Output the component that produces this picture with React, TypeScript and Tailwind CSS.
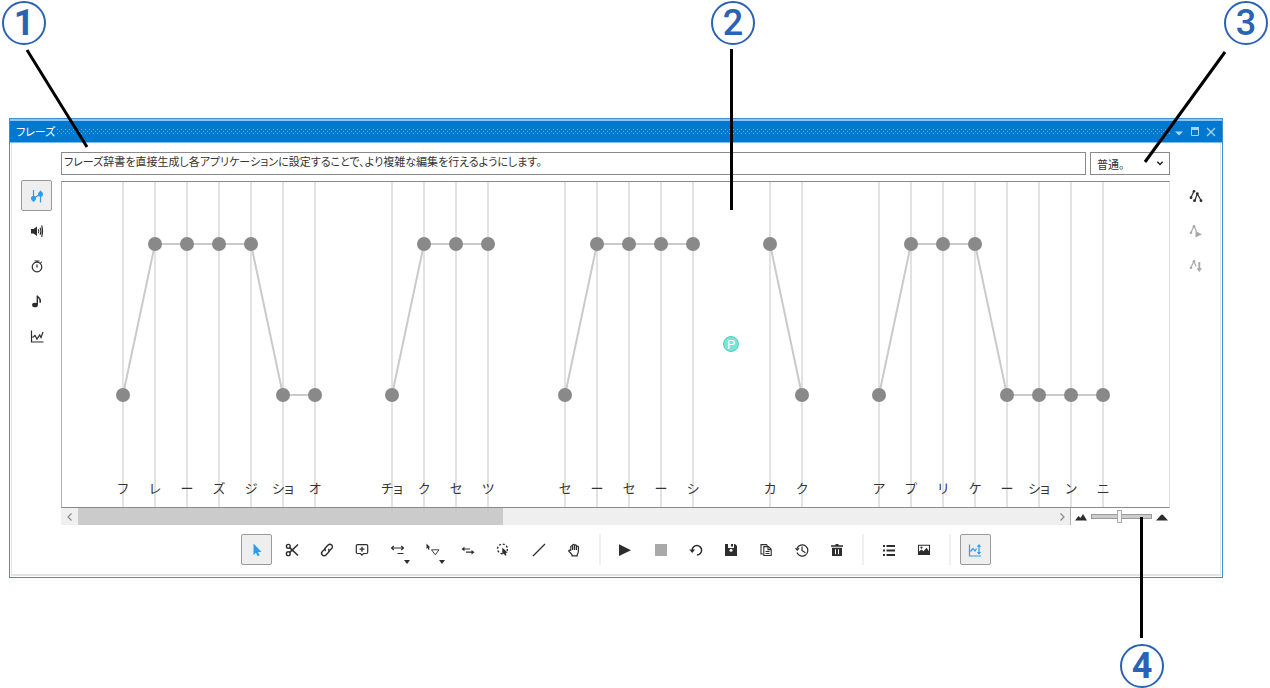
import { useState } from "react";
import type { ReactNode } from "react";

type Point = { x: number; high: boolean; label: string };

const HIGH_Y = 62;
const LOW_Y = 213;

function phrase(start: number, moras: [string, boolean][]): Point[] {
  return moras.map(([label, high], i) => ({ x: start + i * 32, high, label }));
}

const phrases: Point[][] = [
  phrase(61, [["フ", false], ["レ", true], ["ー", true], ["ズ", true], ["ジ", true], ["ショ", false], ["オ", false]]),
  phrase(330, [["チョ", false], ["ク", true], ["セ", true], ["ツ", true]]),
  phrase(503, [["セ", false], ["ー", true], ["セ", true], ["ー", true], ["シ", true]]),
  phrase(708, [["カ", true], ["ク", false]]),
  phrase(817, [["ア", false], ["プ", true], ["リ", true], ["ケ", true], ["ー", false], ["ショ", false], ["ン", false], ["ニ", false]]),
];

function Icon({ children }: { children: ReactNode }) {
  return (
    <svg viewBox="0 0 16 16" className="size-4 shrink-0" fill="none" stroke="currentColor" strokeWidth="1.2" aria-hidden="true">
      {children}
    </svg>
  );
}

const icons = {
  pitch: (
    <Icon>
      <path d="M4.500 2v10M11.500 5v9.500M4.500 10.500l7-4.500" strokeWidth="1.200" />
      <circle cx="4.500" cy="10.200" r="2.500" fill="currentColor" stroke="none" />
      <circle cx="11.500" cy="6.300" r="2.500" fill="currentColor" stroke="none" />
      <path d="M2.500 11.500h4l-2 2.800zM9.500 5h4l-2-2.800z" fill="currentColor" stroke="none" />
    </Icon>
  ),
  volume: (
    <Icon>
      <path d="M2 6h2.500l3.500-2.500v9.500L4.500 10.500H2z" fill="currentColor" stroke="none" />
      <path d="M9.300 6.200q1.200 2 0 4M11 4.700q2 3.500 0 7M12.700 2.500q1.800 5.700 0 11.500" strokeWidth="1.100" />
    </Icon>
  ),
  timer: (
    <Icon>
      <circle cx="8" cy="9" r="4.800" />
      <path d="M5.500 3h5M8 3v1.500M8 6.500v3M11.500 4.800l1.200-.8" />
    </Icon>
  ),
  note: (
    <Icon>
      <ellipse cx="6" cy="12" rx="2.900" ry="2.300" fill="currentColor" stroke="none" />
      <path d="M8.300 12V2.500c.4 2.300 4.400 3 2.700 7.300" strokeWidth="1.400" />
    </Icon>
  ),
  chart: (
    <Icon>
      <path d="M2.500 2.500v11.500H14.500M3.500 9.500L6 7.500l2 3.500 2.700-4 1.300 2.500 2-5.500" strokeWidth="1.200" />
    </Icon>
  ),
  pointer: (
    <Icon>
      <path d="M4.500 1.500v11.500l2.500-2.200 1.600 3.500 2-1-1.600-3.200h3.500z" fill="currentColor" stroke="none" />
    </Icon>
  ),
  scissors: (
    <Icon>
      <circle cx="4.300" cy="4.300" r="1.900" strokeWidth="1.400" />
      <circle cx="4.300" cy="11.700" r="1.900" strokeWidth="1.400" />
      <path d="M5.700 10.400L14 2.500M5.700 5.600L14 13.500" strokeWidth="1.500" />
    </Icon>
  ),
  link: (
    <Icon>
      <g transform="rotate(-45 8 8)" strokeWidth="1.400">
        <path d="M8 5.700H3.700a2.500 2.500 0 0 0 0 5h3.500a2.500 2.500 0 0 0 2.500-2.500" />
        <path d="M8 10.300h4.300a2.500 2.500 0 0 0 0-5H8.800a2.500 2.500 0 0 0-2.500 2.500" />
      </g>
    </Icon>
  ),
  comment: (
    <Icon>
      <path d="M3.500 2.600h9q1.200 0 1.200 1.200v6.500q0 1.200-1.200 1.200H9.500L8 13.200l-1.500-1.700h-3q-1.200 0-1.200-1.200V3.800q0-1.200 1.200-1.200z" strokeWidth="1.200" />
      <path d="M8 4.700v5M5.500 7.200h5" strokeWidth="1.300" />
    </Icon>
  ),
  stretch: (
    <Icon>
      <path d="M1.500 6h12M3.800 4L1.500 6l2.300 2M11.200 4L13.500 6l-2.300 2M7.500 11.500h6" strokeWidth="1.100" />
    </Icon>
  ),
  shape: (
    <Icon>
      <path d="M1.500 1.500v5.500l1.200-1 .9 2 1-.5-.9-1.900 1.700-.1z" fill="currentColor" stroke="none" />
      <path d="M6.500 7.800h7.500l-3.700 5z" strokeWidth=".9" />
    </Icon>
  ),
  swap: (
    <Icon>
      <path d="M3 7h7M6 10.200h7" strokeWidth="1.200" />
      <path d="M4.500 4.800v4.400L1.500 7zM11.500 8v4.400l3-2.200z" fill="currentColor" stroke="none" />
    </Icon>
  ),
  lasso: (
    <Icon>
      <circle cx="7.500" cy="7" r="4.900" strokeDasharray="2 1.800" strokeWidth="1.400" />
      <path d="M7.300 5.500v7.300l1.600-1.400 1.200 2.300 1.400-.7-1.100-2.200h2.300z" fill="currentColor" stroke="none" />
    </Icon>
  ),
  line: (
    <Icon>
      <path d="M2 14L14 2" strokeWidth="1.300" />
    </Icon>
  ),
  hand: (
    <Icon>
      <path d="M4.800 8.800V4.500q.9-1.500 1.800 0V3q1-1.300 1.900 0v.5q1-1.200 1.900 0v1q1.400-1 2 .3V9q0 2.300-1.200 3.500v1.300H6v-1.300L2.800 9.200q-.3-1.500 1.200-1l.8.6M6.600 4.500V8M8.500 3.500V8M10.400 4.500V8" strokeWidth="1.200" />
    </Icon>
  ),
  play: (
    <Icon>
      <path d="M2 2.300v11.700l12-5.800z" fill="currentColor" stroke="none" />
    </Icon>
  ),
  stop: (
    <Icon>
      <path d="M2 2h12v12H2z" fill="currentColor" stroke="none" />
    </Icon>
  ),
  undo: (
    <Icon>
      <path d="M4.200 8.500a4.700 4.700 0 1 1 4.700 4.500" strokeWidth="1.500" />
      <path d="M1.300 7.500h5.800L4.200 11z" fill="currentColor" stroke="none" />
    </Icon>
  ),
  save: (
    <Icon>
      <path d="M2 2h3v4h6V2h1l2 2v10H2z" fill="currentColor" stroke="none" />
      <path d="M8 2h2v2.500H8z" fill="currentColor" stroke="none" />
      <circle cx="8" cy="8.300" r="1.500" fill="white" stroke="none" />
    </Icon>
  ),
  copy: (
    <Icon>
      <path d="M5 12H3V2.600h5.500l1 1.200M5.800 4.600h4.700l2.700 2.700v6.200H5.800z" strokeWidth="1.100" />
      <path d="M10 4.600v3h3M7.500 9.500h4M7.500 11.500h4" strokeWidth="1.100" />
    </Icon>
  ),
  history: (
    <Icon>
      <path d="M3 6.500a5.600 5.600 0 1 1 0 4M1.500 6.200l1.800 2 1.700-2M8 4.500v4l3.400 2.300" strokeWidth="1.200" />
    </Icon>
  ),
  trash: (
    <Icon>
      <path d="M2 3.200h12v1.500H2zM6.500 2h3v1.500h-3z" fill="currentColor" stroke="none" />
      <path d="M3 5.700h10V14H3zM6 7.200v5h1v-5zM9 7.200v5h1v-5z" fill="currentColor" fillRule="evenodd" stroke="none" />
    </Icon>
  ),
  list: (
    <Icon>
      <path d="M5.500 4H14M5.500 8.500H14M5.500 13H14" strokeWidth="1.900" />
      <path d="M2 4h2M2 8.500h2M2 13h2" strokeWidth="2" />
    </Icon>
  ),
  image: (
    <Icon>
      <path d="M2.500 3.200h11v9.300h-11z" strokeWidth="1.100" />
      <path d="M3 12.200V9.500L5.500 7.500l2 1.800 3-3.500 2.700 3.700v2.700z" fill="currentColor" stroke="none" />
      <circle cx="5.500" cy="5.600" r="1.100" fill="currentColor" stroke="none" />
    </Icon>
  ),
  range: (
    <Icon>
      <path d="M2.500 2.500v11.500H14M3.500 9.500L6 6.500l2 2.500 1.500-2.500M12 3.500v8" strokeWidth="1.200" />
      <path d="M9.900 4.800L12 2l2.100 2.800zM9.900 10L12 12.800l2.100-2.800z" fill="currentColor" stroke="none" />
    </Icon>
  ),
  curve: (
    <Icon>
      <path d="M3 9.500l3-6.500M6.800 12.700l2.500-7 3.900 7" strokeWidth="1.200" />
      <circle cx="6" cy="3.300" r="1.300" fill="currentColor" stroke="none" />
      <circle cx="9.300" cy="5.700" r="1.400" fill="currentColor" stroke="none" />
      <circle cx="3" cy="9.700" r="1.400" fill="currentColor" stroke="none" />
      <circle cx="6.500" cy="12.700" r="1.400" fill="currentColor" stroke="none" />
      <circle cx="13" cy="12.700" r="1.400" fill="currentColor" stroke="none" />
    </Icon>
  ),
  curvePlay: (
    <Icon>
      <path d="M3 9.500l3-6.500 2.500 5.500" strokeWidth="1.200" />
      <circle cx="6" cy="3.300" r="1.300" fill="currentColor" stroke="none" />
      <circle cx="3" cy="9.700" r="1.300" fill="currentColor" stroke="none" />
      <path d="M7.500 8v6.500l6.500-3.200z" fill="currentColor" stroke="none" />
    </Icon>
  ),
  curveDown: (
    <Icon>
      <path d="M3 9.500l3-6.500 2 5.500" strokeWidth="1.200" />
      <path d="M11.300 4v7" strokeWidth="1.900" />
      <circle cx="6" cy="3.300" r="1.300" fill="currentColor" stroke="none" />
      <circle cx="3" cy="9.700" r="1.300" fill="currentColor" stroke="none" />
      <path d="M8.500 10.300h5.600l-2.800 3.700z" fill="currentColor" stroke="none" />
    </Icon>
  ),
};

type IconName = keyof typeof icons;

function ToolButton({ icon, label, active, disabled, menu }: { icon: IconName; label: string; active?: boolean; disabled?: boolean; menu?: boolean }) {
  return (
    <button
      type="button"
      aria-label={label}
      aria-pressed={active}
      disabled={disabled}
      className={
        "relative flex size-[31px] shrink-0 items-center justify-center rounded-xs border " +
        (active ? "border-[#9a9a9a] bg-[#eeeeee] text-[#2a9df0]" : disabled ? "border-transparent text-[#a9a9a9]" : "border-transparent text-[#2d2d2d]")
      }
    >
      {icons[icon]}
      {menu && (
        <svg viewBox="0 0 6 4" className="absolute right-0.5 bottom-0 h-1 w-1.5" fill="currentColor" aria-hidden="true">
          <path d="M0 0h6L3 4z" />
        </svg>
      )}
    </button>
  );
}

function Separator() {
  return (
    <div className="flex h-[31px] w-3 justify-center" role="separator">
      <div className="w-0.5 bg-[#f0f0f0]" />
    </div>
  );
}

function TitleBar() {
  return (
    <header className="flex h-6 items-center border-t-2 border-b border-t-[#8cc4f0] border-b-[#7fbdec] bg-[#0078d0] pr-1.5 pl-1.5 text-white">
      <h1 className="text-[11px] leading-none [font-feature-settings:'palt']">フレーズ</h1>
      <svg className="ml-0.5 h-[5px] min-w-0 flex-1" shapeRendering="crispEdges" aria-hidden="true">
        <defs>
          <pattern id="grip" width="4" height="4" patternUnits="userSpaceOnUse">
            <path d="M0 0h1v1H0zM2 2h1v1H2z" fill="#68b2e8" />
          </pattern>
        </defs>
        <rect width="100%" height="5" fill="url(#grip)" />
      </svg>
      <div className="ml-1 flex items-center gap-1.5 text-[#a8d3f4]">
        <button type="button" aria-label="メニュー">
          <svg viewBox="0 0 10 10" className="size-2.5" fill="currentColor"><path d="M1 4.500h8L5 8.500z" /></svg>
        </button>
        <button type="button" aria-label="最大化">
          <svg viewBox="0 0 10 10" className="size-2.5" fill="none" stroke="currentColor"><path d="M1.500.5h7v8h-7z" /><path d="M1 1.500h8" strokeWidth="3" /></svg>
        </button>
        <button type="button" aria-label="閉じる">
          <svg viewBox="0 0 10 10" className="size-2.5" fill="none" stroke="currentColor" strokeWidth="1.300"><path d="M1 1l8 8M9 1L1 9" /></svg>
        </button>
      </div>
    </header>
  );
}

function PitchCanvas() {
  return (
    <div className="h-[327px] overflow-hidden border border-r-[#dcdcdc] border-t-[#8a8a8a] border-b-[#8a8a8a] border-l-[#b0b0b0] bg-white">
      <svg className="h-[325px] w-full" role="img" aria-label="アクセント">
        {phrases.map((points, p) => (
          <g key={p}>
            {points.map((pt) => (
              <path key={pt.x} d={`M${pt.x} 0V325`} stroke="#e2e2e2" strokeWidth="2" />
            ))}
            <polyline points={points.map((pt) => `${pt.x},${pt.high ? HIGH_Y : LOW_Y}`).join(" ")} fill="none" stroke="#cacaca" strokeWidth="2" />
            {points.map((pt) => (
              <g key={pt.x}>
                <circle cx={pt.x} cy={pt.high ? HIGH_Y : LOW_Y} r="7" fill="#898989" />
                <text x={pt.x} y="311" textAnchor="middle" fill="#333333" className="text-[13px] [font-feature-settings:'palt']">
                  {pt.label}
                </text>
              </g>
            ))}
          </g>
        ))}
        <circle cx="669" cy="162" r="7.500" fill="#7ce2d6" stroke="#4fcdbf" />
        <text x="669" y="167" textAnchor="middle" fill="#ffffff" className="font-[Roboto,sans-serif] text-[13px]">P</text>
      </svg>
    </div>
  );
}

function ScrollRow() {
  const [zoom, setZoom] = useState(47);
  return (
    <div className="flex h-[17px] items-center">
      <div className="flex h-full min-w-0 flex-1 items-center border-r border-[#b0b0b0] bg-[#efefef] text-[#8a8a8a]">
        <button type="button" aria-label="左へスクロール" className="flex w-[17px] justify-center">
          <svg viewBox="0 0 8 8" className="size-2" fill="none" stroke="currentColor" strokeWidth="1.200"><path d="M5.500 .5L2 4l3.500 3.500" /></svg>
        </button>
        <div className="h-full flex-1">
          <div className="h-full w-[43.600%] bg-[#cbcbcb]" />
        </div>
        <button type="button" aria-label="右へスクロール" className="flex w-[17px] justify-center">
          <svg viewBox="0 0 8 8" className="size-2" fill="none" stroke="currentColor" strokeWidth="1.200"><path d="M2.500 .5L6 4 2.500 7.500" /></svg>
        </button>
      </div>
      <div className="flex w-[99px] items-center gap-1 pr-0.5 pl-1 text-[#2d2d2d]">
        <svg viewBox="0 0 12 8" className="h-2 w-3 shrink-0" fill="currentColor" aria-hidden="true"><path d="M0 7.500L3.500 3l2 2L8 1l4 6.500z" /></svg>
        <input
          type="range"
          aria-label="表示倍率"
          value={zoom}
          onChange={(e) => setZoom(Number(e.target.value))}
          className="h-[5px] min-w-0 flex-1 appearance-none border border-[#9a9a9a] bg-[#cccccc] [&::-webkit-slider-thumb]:h-[13px] [&::-webkit-slider-thumb]:w-[5px] [&::-webkit-slider-thumb]:appearance-none [&::-webkit-slider-thumb]:border [&::-webkit-slider-thumb]:border-[#ababab] [&::-webkit-slider-thumb]:bg-[#f4f4f4]"
        />
        <svg viewBox="0 0 12 8" className="h-2 w-3 shrink-0" fill="currentColor" aria-hidden="true"><path d="M0 7.500L5 2q1-1 2 0l5 5.500z" /></svg>
      </div>
    </div>
  );
}

function Toolbar() {
  return (
    <div className="mx-auto mt-[9px] mb-[9px] flex w-[750px] max-w-full justify-between" role="toolbar" aria-label="編集ツール">
      <ToolButton icon="pointer" label="選択" active />
      <ToolButton icon="scissors" label="分割" />
      <ToolButton icon="link" label="結合" />
      <ToolButton icon="comment" label="追加" />
      <ToolButton icon="stretch" label="伸縮" menu />
      <ToolButton icon="shape" label="形状" menu />
      <ToolButton icon="swap" label="入れ替え" />
      <ToolButton icon="lasso" label="範囲選択" />
      <ToolButton icon="line" label="直線" />
      <ToolButton icon="hand" label="移動" />
      <Separator />
      <ToolButton icon="play" label="再生" />
      <ToolButton icon="stop" label="停止" disabled />
      <ToolButton icon="undo" label="元に戻す" />
      <ToolButton icon="save" label="保存" />
      <ToolButton icon="copy" label="コピー" />
      <ToolButton icon="history" label="履歴" />
      <ToolButton icon="trash" label="削除" />
      <Separator />
      <ToolButton icon="list" label="一覧" />
      <ToolButton icon="image" label="画像" />
      <Separator />
      <ToolButton icon="range" label="範囲調整" active />
    </div>
  );
}

function Badge({ children, className }: { children: ReactNode; className: string }) {
  return (
    <div className={"absolute flex size-11 items-center justify-center rounded-full border-2 border-[#2a62b4] bg-white font-[Roboto,sans-serif] text-4xl leading-none text-[#2a62b4] " + className}>
      {children}
    </div>
  );
}

export default function App() {
  const [text, setText] = useState("フレーズ辞書を直接生成し各アプリケーションに設定することで、より複雑な編集を行えるようにします。");
  return (
    <main className="relative bg-white pt-[118px] pr-[47px] pb-[110px] pl-[9px] font-['Noto_Sans_CJK_JP',sans-serif]">
      <section className="border border-[#3f92d6] bg-white">
        <TitleBar />
        <div className="mx-px mb-px border-x border-b-2 border-[#e2e2e2]">
          <div className="flex px-[9px] pt-[9px]">
            <div className="mt-[28px] mr-[9px] flex flex-col gap-1">
              <ToolButton icon="pitch" label="アクセント" active />
              <ToolButton icon="volume" label="音量" />
              <ToolButton icon="timer" label="話速" />
              <ToolButton icon="note" label="高さ" />
              <ToolButton icon="chart" label="抑揚" />
            </div>
            <div className="min-w-0 flex-1">
              <div className="mb-1.5 flex h-[23px] gap-1">
                <input
                  aria-label="フレーズ"
                  value={text}
                  onChange={(e) => setText(e.target.value)}
                  className="min-w-0 flex-1 border border-[#8a8a8a] px-0.5 pb-1 text-[11px] text-[#333333] [font-feature-settings:'palt']"
                />
                <div className="relative flex w-20">
                  <select aria-label="スタイル" className="h-[23px] w-full appearance-none border border-[#8a8a8a] bg-white pl-1.5 text-[11px] leading-5 text-[#333333] [font-feature-settings:'palt']">
                    <option>普通。</option>
                  </select>
                  <svg viewBox="0 0 8 8" className="pointer-events-none absolute top-[7px] right-1.5 size-2" fill="none" stroke="#222222" strokeWidth="1.500" aria-hidden="true">
                    <path d="M1.300 2.700L4 5.500l2.700-2.800" />
                  </svg>
                </div>
              </div>
              <PitchCanvas />
              <ScrollRow />
            </div>
            <div className="mt-[28px] ml-[10px] flex flex-col gap-1">
              <ToolButton icon="curve" label="曲線" />
              <ToolButton icon="curvePlay" label="曲線を再生" disabled />
              <ToolButton icon="curveDown" label="曲線を適用" disabled />
            </div>
          </div>
          <Toolbar />
        </div>
      </section>

      <Badge className="top-px left-0.5 font-bold">1</Badge>
      <Badge className="top-px left-[711px] font-medium">2</Badge>
      <Badge className="top-px right-0.5 font-medium">3</Badge>
      <Badge className="right-[106px] bottom-0 font-bold">4</Badge>
      <svg className="pointer-events-none absolute top-[48px] left-[24px] h-[102px] w-[66px]" aria-hidden="true">
        <path d="M3 2L63 99" stroke="#000000" strokeWidth="3" />
      </svg>
      <div className="pointer-events-none absolute top-[49px] left-[730px] h-[161px] w-[3px] bg-black" />
      <svg className="pointer-events-none absolute top-[50px] right-[42px] h-[116px] w-[86px]" aria-hidden="true">
        <path d="M83 2L3 112" stroke="#000000" strokeWidth="3" />
      </svg>
      <div className="pointer-events-none absolute right-[127px] bottom-[50px] h-[121px] w-[3px] bg-black" />
    </main>
  );
}
